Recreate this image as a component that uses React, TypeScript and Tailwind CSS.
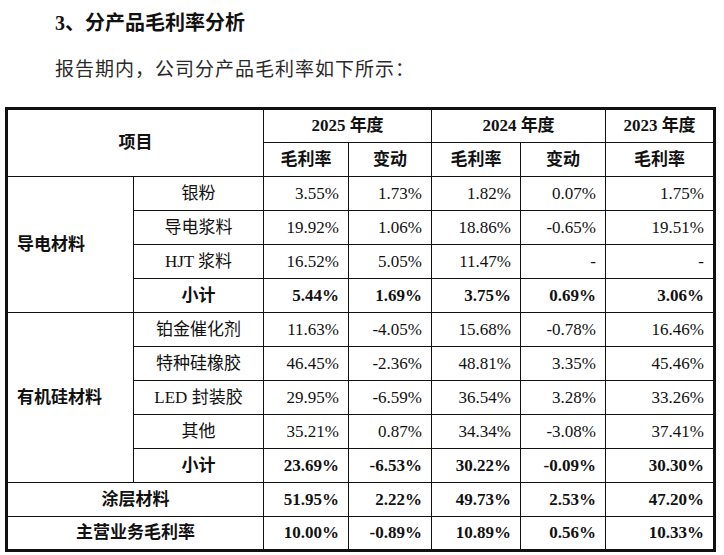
const serif = "font-['Liberation_Serif','Noto_Sans_CJK_SC',serif]";

type Row = {
  name: string;
  vals: string[];
  bold?: boolean;
};

const conductive: Row[] = [
  { name: "银粉", vals: ["3.55%", "1.73%", "1.82%", "0.07%", "1.75%"] },
  { name: "导电浆料", vals: ["19.92%", "1.06%", "18.86%", "-0.65%", "19.51%"] },
  { name: "HJT 浆料", vals: ["16.52%", "5.05%", "11.47%", "-", "-"] },
  { name: "小计", vals: ["5.44%", "1.69%", "3.75%", "0.69%", "3.06%"], bold: true },
];

const silicone: Row[] = [
  { name: "铂金催化剂", vals: ["11.63%", "-4.05%", "15.68%", "-0.78%", "16.46%"] },
  { name: "特种硅橡胶", vals: ["46.45%", "-2.36%", "48.81%", "3.35%", "45.46%"] },
  { name: "LED 封装胶", vals: ["29.95%", "-6.59%", "36.54%", "3.28%", "33.26%"] },
  { name: "其他", vals: ["35.21%", "0.87%", "34.34%", "-3.08%", "37.41%"] },
  { name: "小计", vals: ["23.69%", "-6.53%", "30.22%", "-0.09%", "30.30%"], bold: true },
];

const cell = "border border-[#111] h-[34px] p-0 align-middle";
const num = `${cell} text-right pr-[9px]`;

function Vals({ row }: { row: Row }) {
  return (
    <>
      {row.vals.map((v, i) => (
        <td key={i} className={`${num} ${row.bold ? "font-bold" : ""}`}>
          {v}
        </td>
      ))}
    </>
  );
}

function Group({ label, rows }: { label: string; rows: Row[] }) {
  return (
    <>
      {rows.map((r, i) => (
        <tr key={r.name + i}>
          {i === 0 && (
            <td rowSpan={rows.length} className={`${cell} text-left pl-[9px] font-bold`}>
              {label}
            </td>
          )}
          <td className={`${cell} text-center ${r.bold ? "font-bold" : ""}`}>{r.name}</td>
          <Vals row={r} />
        </tr>
      ))}
    </>
  );
}

export default function App() {
  return (
    <div className={`w-[724px] h-[555px] bg-white text-[#111] ${serif} overflow-hidden`}>
      <div className="pl-[55px] pt-[8px]">
        <h2 className="text-[20px] font-bold leading-[30px]">3、分产品毛利率分析</h2>
        <p className="mt-[17px] text-[19px] leading-[30px] tracking-[1px] text-[#2a2a2a]">
          报告期内，公司分产品毛利率如下所示：
        </p>
      </div>
      <table className="ml-[5px] mt-[22px] w-[711px] table-fixed border-collapse border-[3px] border-[#111] text-[17px] leading-[20px]">
        <colgroup>
          <col className="w-[127px]" />
          <col className="w-[130px]" />
          <col className="w-[85px]" />
          <col className="w-[83px]" />
          <col className="w-[89px]" />
          <col className="w-[85px]" />
          <col className="w-[109px]" />
        </colgroup>
        <thead>
          <tr>
            <th colSpan={2} rowSpan={2} className={`${cell} font-bold`}>
              项目
            </th>
            <th colSpan={2} className={`${cell} font-bold`}>2025 年度</th>
            <th colSpan={2} className={`${cell} font-bold`}>2024 年度</th>
            <th className={`${cell} font-bold`}>2023 年度</th>
          </tr>
          <tr>
            <th className={`${cell} font-bold`}>毛利率</th>
            <th className={`${cell} font-bold`}>变动</th>
            <th className={`${cell} font-bold`}>毛利率</th>
            <th className={`${cell} font-bold`}>变动</th>
            <th className={`${cell} font-bold`}>毛利率</th>
          </tr>
        </thead>
        <tbody>
          <Group label="导电材料" rows={conductive} />
          <Group label="有机硅材料" rows={silicone} />
          <tr>
            <td colSpan={2} className={`${cell} text-center font-bold`}>涂层材料</td>
            <Vals row={{ name: "", vals: ["51.95%", "2.22%", "49.73%", "2.53%", "47.20%"], bold: true }} />
          </tr>
          <tr>
            <td colSpan={2} className={`${cell} text-center font-bold`}>主营业务毛利率</td>
            <Vals row={{ name: "", vals: ["10.00%", "-0.89%", "10.89%", "0.56%", "10.33%"], bold: true }} />
          </tr>
        </tbody>
      </table>
    </div>
  );
}
